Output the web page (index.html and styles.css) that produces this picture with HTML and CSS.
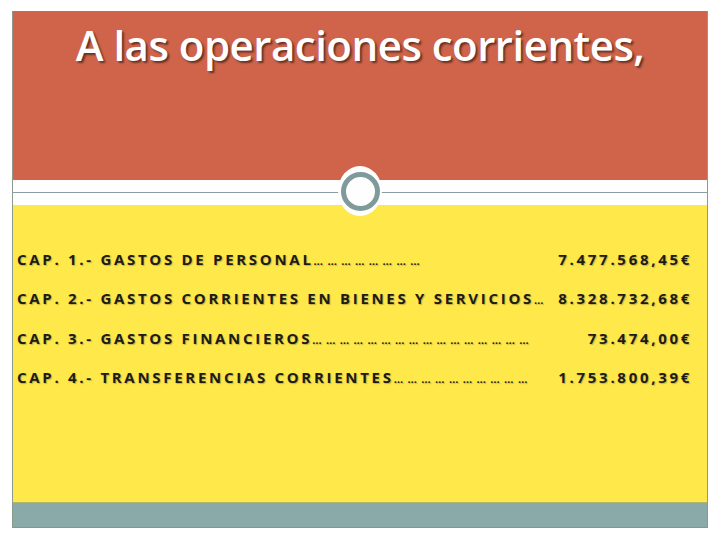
FILE: index.html
```html
<!DOCTYPE html>
<html lang="es">
<head>
<meta charset="utf-8">
<link rel="stylesheet" href="styles.css">
</head>
<body>
<div class="slide">
  <header class="head">
    <h1 class="title">A las operaciones corrientes,</h1>
  </header>
  <div class="band">
    <div class="rule"></div>
    <div class="knob"><div class="ring"></div></div>
  </div>
  <main class="content">
    <div class="row"><span class="label">CAP. 1.- GASTOS DE PERSONAL<span class="dots">&hellip;&hellip;&hellip;&hellip;&hellip;&hellip;&hellip;&hellip;</span></span><span class="amount">7.477.568,45€</span></div>
    <div class="row"><span class="label">CAP. 2.- GASTOS CORRIENTES EN BIENES Y SERVICIOS<span class="dots">&hellip;</span></span><span class="amount">8.328.732,68€</span></div>
    <div class="row"><span class="label">CAP. 3.- GASTOS FINANCIEROS<span class="dots">&hellip;&hellip;&hellip;&hellip;&hellip;&hellip;&hellip;&hellip;&hellip;&hellip;&hellip;&hellip;&hellip;&hellip;&hellip;&hellip;</span></span><span class="amount">73.474,00€</span></div>
    <div class="row"><span class="label">CAP. 4.- TRANSFERENCIAS CORRIENTES<span class="dots">&hellip;&hellip;&hellip;&hellip;&hellip;&hellip;&hellip;&hellip;&hellip;&hellip;</span></span><span class="amount">1.753.800,39€</span></div>
  </main>
  <footer class="foot"></footer>
</div>
</body>
</html>
```
FILE: styles.css
```css
html, body {
  margin: 0;
  padding: 0;
  background: #ffffff;
}
body {
  width: 720px;
  height: 540px;
  overflow: hidden;
}
.slide {
  margin: 11px 0 0 12px;
  width: 696px;
  height: 517px;
  display: flex;
  flex-direction: column;
  border-left: 1px solid #8f9a8f;
  border-right: 1px solid #8f9a8f;
  box-sizing: border-box;
}
.head {
  height: 169px;
  background: #cf644a;
  border-top: 1px solid #b5735f;
  box-sizing: border-box;
  display: flex;
  justify-content: center;
}
.title {
  margin: 8px 0 0 0;
  font-family: "Open Sans", sans-serif;
  font-weight: 600;
  font-size: 42px;
  line-height: 1.2;
  color: #ffffff;
  text-shadow: 2px 2px 2px rgba(0,0,0,0.5);
  letter-spacing: -0.5px;
}
.band {
  height: 25px;
  background: #fefefe;
  position: relative;
  display: flex;
  align-items: center;
}
.rule {
  flex: 1;
  height: 1px;
  background: #8a9e9f;
}
.knob {
  position: absolute;
  left: 325px;
  top: -14px;
  width: 44px;
  height: 50px;
  border-radius: 50%;
  background: #fefefe;
  display: flex;
  align-items: center;
  justify-content: center;
}
.ring {
  width: 29px;
  height: 29px;
  border: 5px solid #7f9a9b;
  border-radius: 50%;
  background: #fefefe;
}
.content {
  flex: 1;
  background: #ffe84a;
  padding: 34px 15px 0 4px;
  display: flex;
  flex-direction: column;
}
.row {
  height: 39.5px;
  display: flex;
  justify-content: space-between;
  align-items: center;
  font-family: "Open Sans", sans-serif;
  font-weight: 700;
  font-size: 15px;
  letter-spacing: 2.7px;
  color: #1c1c14;
  text-shadow: 1px 1px 1px rgba(120,110,60,0.45);
  white-space: nowrap;
}
.dots {
  font-size: 11px;
  letter-spacing: 4.4px;
}
.foot {
  height: 24px;
  background: #8aaaa9;
  border-top: 1px solid #b4b56a;
  border-bottom: 1px solid #7d9897;
}
```
